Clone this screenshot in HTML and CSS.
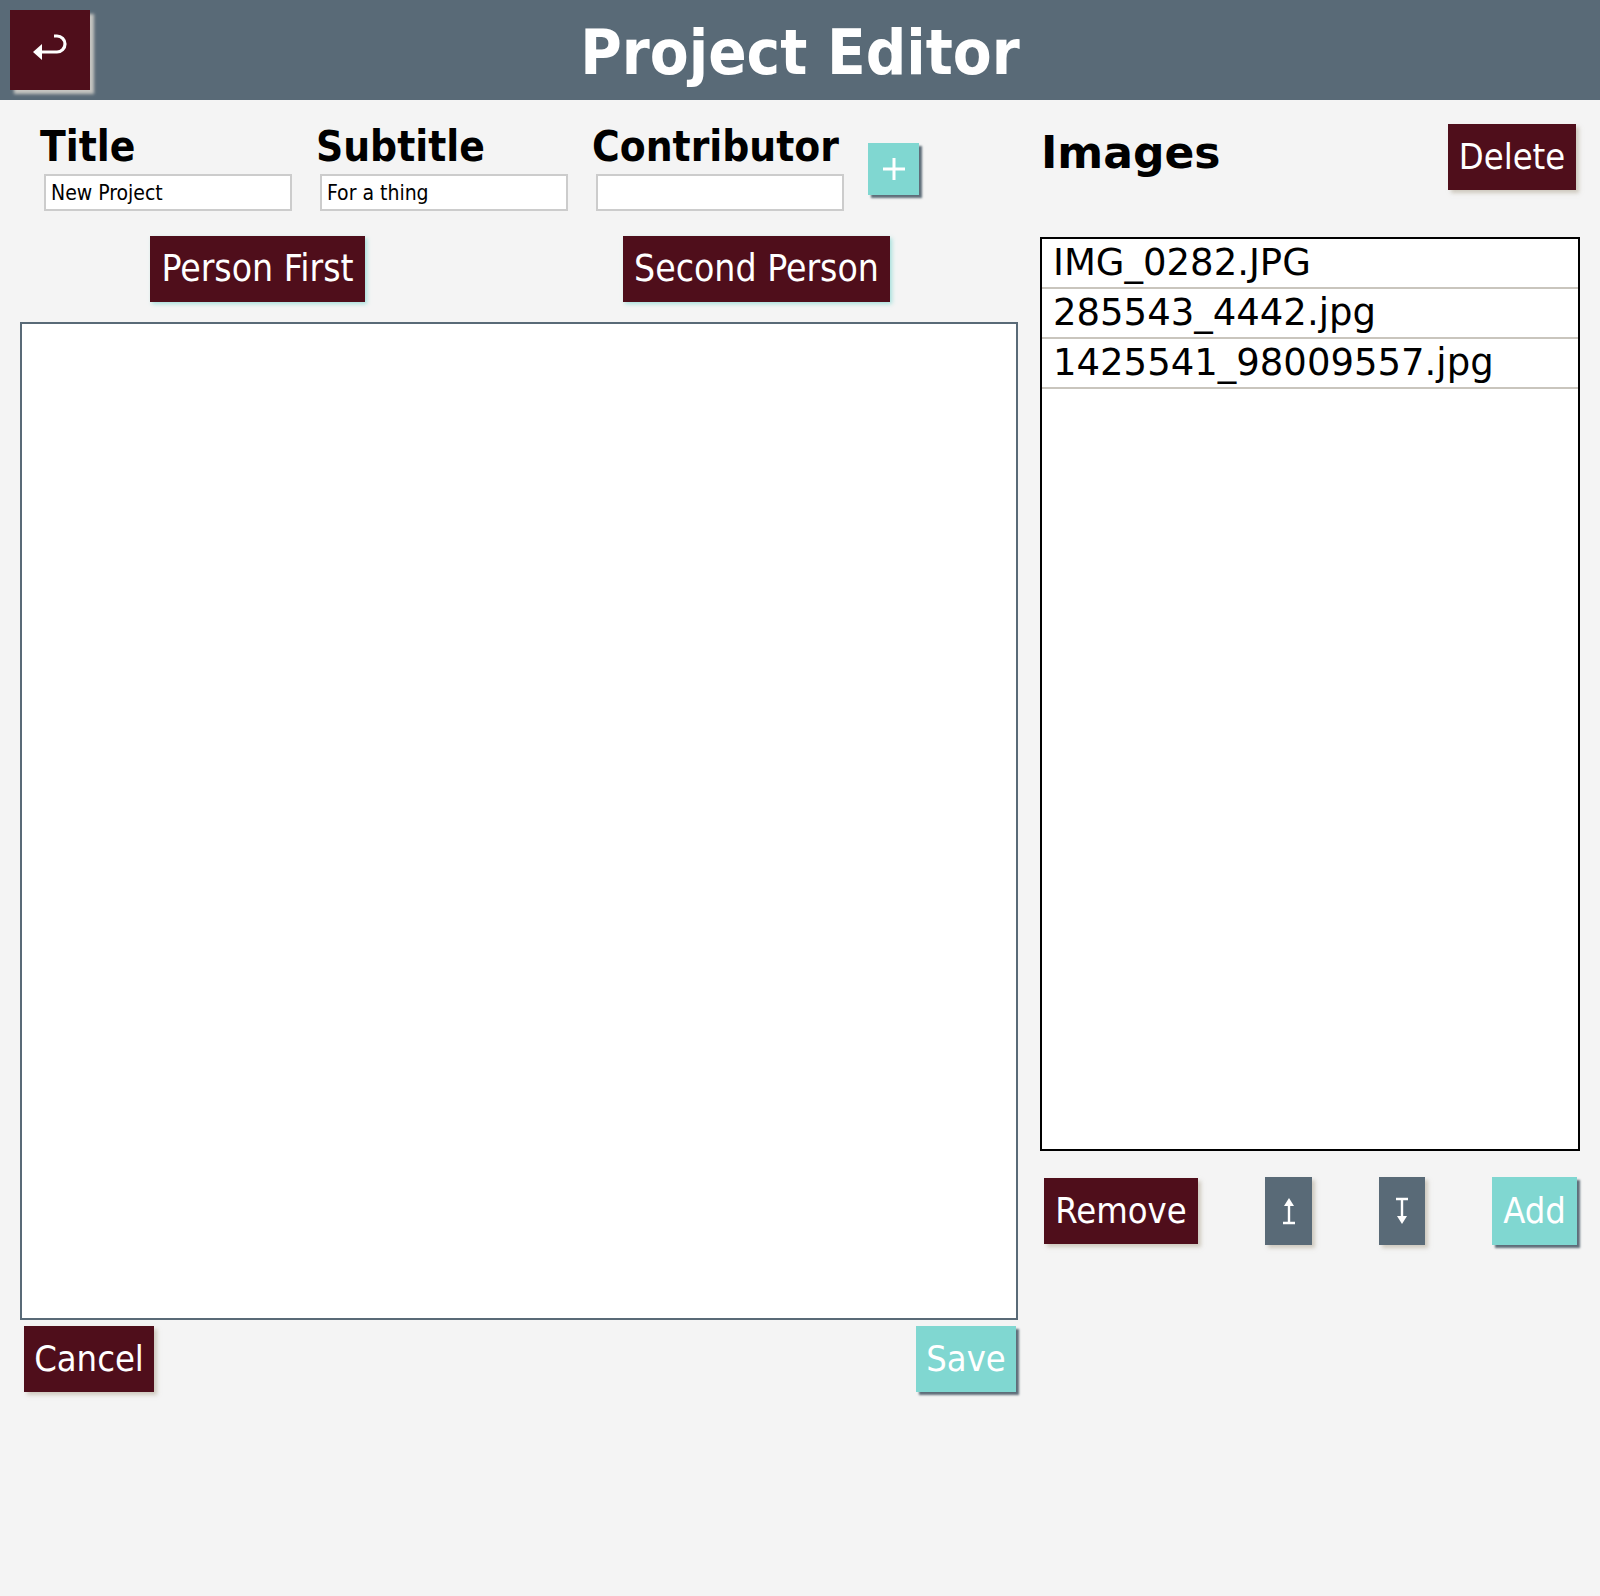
FILE: index.html
```html
<!DOCTYPE html>
<html lang="en">
<head>
<meta charset="utf-8">
<title>Project Editor</title>
<link rel="stylesheet" href="styles.css">
</head>
<body>
<header class="topbar">
  <div class="topbar-left">
    <button class="back-btn" type="button" aria-label="Back">
      <svg width="34" height="28" viewBox="0 0 34 28" aria-hidden="true">
        <path d="M5 19 H24 A8 8 0 0 0 24 3 H21" fill="none" stroke="#fff" stroke-width="3.2"/>
        <path d="M0 19 L9 11 V27 Z" fill="#fff"/>
      </svg>
    </button>
  </div>
  <h1 class="app-title">Project Editor</h1>
  <div class="topbar-right"></div>
</header>

<main class="main">
  <section class="left">
    <div class="fields">
      <div class="field">
        <label class="field-label" for="f-title">Title</label>
        <input class="field-input" id="f-title" type="text" value="New Project">
      </div>
      <div class="field">
        <label class="field-label" for="f-subtitle">Subtitle</label>
        <input class="field-input" id="f-subtitle" type="text" value="For a thing">
      </div>
      <div class="field">
        <label class="field-label" for="f-contrib">Contributor</label>
        <input class="field-input" id="f-contrib" type="text" value="">
      </div>
      <button class="btn btn-teal btn-plus" type="button" aria-label="Add contributor">
        <svg width="24" height="24" viewBox="0 0 24 24" aria-hidden="true">
          <path d="M12 1 V23 M1 12 H23" stroke="#fff" stroke-width="3" fill="none"/>
        </svg>
      </button>
    </div>

    <div class="persons">
      <button class="btn btn-person btn-person-first" type="button">Person First</button>
      <button class="btn btn-person btn-person-second" type="button">Second Person</button>
    </div>

    <textarea class="editor"></textarea>

    <div class="left-actions">
      <button class="btn btn-maroon btn-cancel" type="button">Cancel</button>
      <button class="btn btn-teal btn-save" type="button">Save</button>
    </div>
  </section>

  <section class="right">
    <div class="images-head">
      <h2 class="images-title">Images</h2>
      <button class="btn btn-maroon btn-delete" type="button">Delete</button>
    </div>
    <ul class="image-list">
      <li class="image-row">IMG_0282.JPG</li>
      <li class="image-row">285543_4442.jpg</li>
      <li class="image-row">1425541_98009557.jpg</li>
    </ul>
    <div class="image-actions">
      <button class="btn btn-maroon btn-remove" type="button">Remove</button>
      <button class="btn btn-slate btn-arrow" type="button" aria-label="Move up">
        <svg width="16" height="28" viewBox="0 0 16 28" aria-hidden="true">
          <path d="M8 4 V26 M2 26 H14" stroke="#fff" stroke-width="2.4" fill="none"/>
          <path d="M8 1 L13 9 H3 Z" fill="#fff"/>
        </svg>
      </button>
      <button class="btn btn-slate btn-arrow btn-arrow-down" type="button" aria-label="Move down">
        <svg width="16" height="28" viewBox="0 0 16 28" aria-hidden="true">
          <path d="M8 2 V24 M2 2 H14" stroke="#fff" stroke-width="2.4" fill="none"/>
          <path d="M8 27 L13 19 H3 Z" fill="#fff"/>
        </svg>
      </button>
      <button class="btn btn-teal btn-add" type="button">Add</button>
    </div>
  </section>
</main>
</body>
</html>
```

FILE: styles.css
```css
html, body {
  margin: 0;
  padding: 0;
}

body {
  background: #f4f4f4;
  min-height: 1596px;
  font-family: "DejaVu Sans Condensed", "DejaVu Sans", sans-serif;
  font-stretch: semi-condensed;
  color: #000;
}

/* Header */
.topbar {
  height: 100px;
  background: #596a77;
  display: grid;
  grid-template-columns: 1fr auto 1fr;
  align-items: center;
}

.topbar-left {
  display: flex;
  align-items: center;
  padding-left: 10px;
}

.back-btn {
  width: 80px;
  height: 80px;
  padding: 0 0 7px 0;
  border: none;
  background: #4f0e1b;
  box-shadow: 4px 4px 3px rgba(215, 212, 205, 0.85);
  display: flex;
  align-items: center;
  justify-content: center;
  cursor: pointer;
}

.back-btn svg {
  display: block;
}

.app-title {
  margin: 0;
  padding-top: 6px;
  color: #fff;
  font-size: 63px;
  font-weight: bold;
  line-height: 1.164;
  font-family: "DejaVu Sans Condensed", "DejaVu Sans", sans-serif;
  font-stretch: semi-condensed;
}

/* Main layout */
.main {
  display: flex;
  gap: 22px;
  padding: 0 20px;
}

.left {
  width: 998px;
  display: flex;
  flex-direction: column;
}

.right {
  width: 540px;
  display: flex;
  flex-direction: column;
}

/* Generic buttons */
.btn {
  border: none;
  padding: 0 10px;
  color: #fff;
  font-family: "DejaVu Sans Condensed", "DejaVu Sans", sans-serif;
  font-stretch: semi-condensed;
  font-size: 36px;
  height: 66px;
  line-height: 66px;
  cursor: pointer;
  white-space: nowrap;
  display: flex;
  align-items: center;
  justify-content: center;
}

.btn-maroon {
  background: #4f0e1b;
  box-shadow: 3px 3px 4px rgba(175, 165, 145, 0.55);
}

.btn-teal {
  background: #80d7d1;
  box-shadow: 3px 3px 2px #5e6d79;
}

.btn-slate {
  background: #596a77;
  box-shadow: 3px 3px 4px rgba(175, 165, 145, 0.55);
}

.btn-person {
  background: #4f0e1b;
  font-size: 37px;
  box-shadow: 2px 2px 4px rgba(128, 215, 209, 0.65);
}

/* Fields */
.fields {
  display: flex;
  align-items: flex-start;
  gap: 24px;
  padding: 25px 0 0 20px;
}

.field {
  width: 252px;
  display: flex;
  flex-direction: column;
}

.field-label {
  font-size: 42px;
  font-weight: bold;
  line-height: 44px;
  height: 44px;
  white-space: nowrap;
}

.field-input {
  margin: 5px 0 0 4px;
  width: 248px;
  height: 37px;
  box-sizing: border-box;
  border: 2px solid #cccccc;
  background: #fff;
  padding: 0 5px;
  font-family: "DejaVu Sans Condensed", "DejaVu Sans", sans-serif;
  font-stretch: semi-condensed;
  font-size: 21px;
  color: #000;
  outline: none;
}

.btn-plus {
  width: 51px;
  height: 52px;
  margin-top: 18px;
  padding: 0;
}

.btn-plus svg {
  display: block;
}

/* Person buttons */
.persons {
  display: flex;
  margin-top: 25px;
  padding-left: 130px;
}

.btn-person-first {
  width: 215px;
}

.btn-person-second {
  width: 267px;
  margin-left: 258px;
}

/* Editor */
.editor {
  display: block;
  margin: 20px 0 0 0;
  width: 998px;
  height: 998px;
  box-sizing: border-box;
  border: 2px solid #596a77;
  background: #fff;
  resize: none;
  outline: none;
  padding: 4px;
}

.left-actions {
  display: flex;
  justify-content: space-between;
  margin-top: 6px;
  padding: 0 2px 0 4px;
}

.btn-cancel {
  width: 130px;
}

.btn-save {
  width: 100px;
}

/* Images panel */
.images-head {
  display: flex;
  justify-content: space-between;
  align-items: flex-start;
  margin-top: 24px;
  padding-right: 4px;
}

.images-title {
  margin: 7px 0 0 1px;
  font-family: "DejaVu Sans", sans-serif;
  font-stretch: normal;
  font-size: 44px;
  font-weight: bold;
  line-height: 44px;
}

.btn-delete {
  width: 128px;
}

.image-list {
  list-style: none;
  margin: 47px 0 0 0;
  padding: 0;
  height: 914px;
  box-sizing: border-box;
  border: 2px solid #000;
  background: #fff;
}

.image-row {
  height: 48px;
  line-height: 48px;
  border-bottom: 2px solid #c9c5bd;
  padding-left: 11px;
  font-family: "DejaVu Sans", sans-serif;
  font-stretch: normal;
  font-size: 37px;
  white-space: nowrap;
}

.image-actions {
  display: flex;
  justify-content: space-between;
  align-items: center;
  margin-top: 26px;
  padding: 0 3px 0 4px;
  height: 68px;
}

.btn-remove {
  width: 154px;
  height: 66px;
}

.btn-arrow {
  width: 47px;
  height: 68px;
  padding: 0;
}

.btn-arrow-down {
  width: 46px;
}

.btn-arrow svg {
  display: block;
}

.btn-add {
  width: 85px;
  height: 68px;
}
```
